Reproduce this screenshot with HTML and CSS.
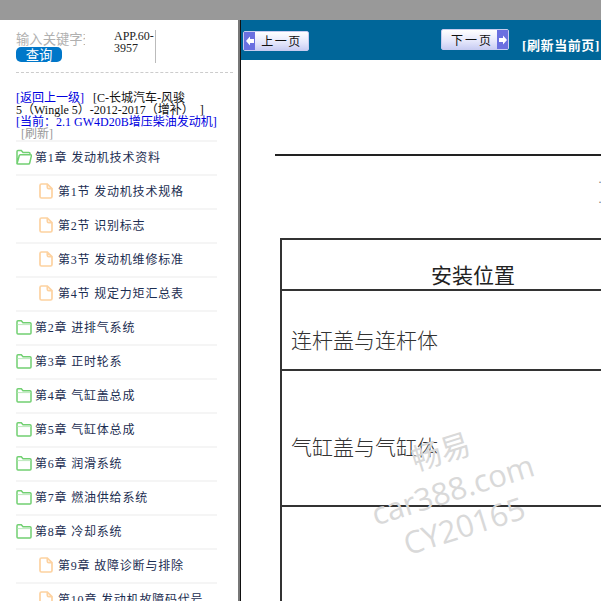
FILE: index.html
```html
<!DOCTYPE html>
<html lang="zh-CN">
<head>
<meta charset="utf-8">
<title>维修手册</title>
<link rel="stylesheet" href="styles.css">
</head>
<body>
<svg class="defs" width="0" height="0" aria-hidden="true">
  <symbol id="folder" viewBox="0 0 16 16"><path d="M1 14V2.800q0-1 1-1h3.300l1.700 2h7q1 0 1 1V14q0 1-1 1H2q-1 0-1-1z" fill="none" stroke="#72d072" stroke-width="1.500"/><path d="M1.500 5.600h13" stroke="#bce9bc" stroke-width="1"/></symbol>
  <symbol id="folder-open" viewBox="0 0 16 16"><path d="M1 14.500V2.500q0-1 1-1h3.300l1.700 2h6q1 0 1 1v1.300M1 14.800l2.200-8q.2-1 1.200-1h10.200q1 0 .8 1l-1.700 7.200q-.2 1-1.200 1H1.800q-.6 0-.8-.200z" fill="none" stroke="#72d072" stroke-width="1.500"/></symbol>
  <symbol id="file" viewBox="0 0 14 16"><path d="M2.500 1h5.800l4.700 4.700v7.800q0 1.500-1.500 1.500H2.500Q1 15 1 13.500v-11Q1 1 2.500 1zM8.300 1v3.200q0 1.500 1.500 1.500H13" fill="none" stroke="#fdd2a0" stroke-width="1.700"/></symbol>
</svg>
<div class="topbar"></div>
<main class="layout">
  <aside class="sidebar">
    <div class="search">
      <div class="search-field">
        <div class="search-input">输入关键字查询</div>
        <button class="search-btn">查询</button>
      </div>
      <div class="search-code">APP.60-3957</div>
    </div>
    <div class="crumbs">
      <a class="link">[返回上一级]</a><span class="crumb-dark">[C-长城汽车-风骏<br>5（Wingle 5）-2012-2017（增补）&nbsp;&nbsp;]</span><br>
      <a class="link">[当前：2.1 GW4D20B增压柴油发动机]</a><br>
      <span class="crumb-muted">[刷新]</span>
    </div>
    <ul class="tree">
      <li class="row"><svg class="ico-folder"><use href="#folder-open"/></svg><span class="row-text">第1章 发动机技术资料</span></li>
      <li class="row sub"><svg class="ico-file"><use href="#file"/></svg><span class="row-text">第1节 发动机技术规格</span></li>
      <li class="row sub"><svg class="ico-file"><use href="#file"/></svg><span class="row-text">第2节 识别标志</span></li>
      <li class="row sub"><svg class="ico-file"><use href="#file"/></svg><span class="row-text">第3节 发动机维修标准</span></li>
      <li class="row sub"><svg class="ico-file"><use href="#file"/></svg><span class="row-text">第4节 规定力矩汇总表</span></li>
      <li class="row"><svg class="ico-folder"><use href="#folder"/></svg><span class="row-text">第2章 进排气系统</span></li>
      <li class="row"><svg class="ico-folder"><use href="#folder"/></svg><span class="row-text">第3章 正时轮系</span></li>
      <li class="row"><svg class="ico-folder"><use href="#folder"/></svg><span class="row-text">第4章 气缸盖总成</span></li>
      <li class="row"><svg class="ico-folder"><use href="#folder"/></svg><span class="row-text">第5章 气缸体总成</span></li>
      <li class="row"><svg class="ico-folder"><use href="#folder"/></svg><span class="row-text">第6章 润滑系统</span></li>
      <li class="row"><svg class="ico-folder"><use href="#folder"/></svg><span class="row-text">第7章 燃油供给系统</span></li>
      <li class="row"><svg class="ico-folder"><use href="#folder"/></svg><span class="row-text">第8章 冷却系统</span></li>
      <li class="row sub"><svg class="ico-file"><use href="#file"/></svg><span class="row-text">第9章 故障诊断与排除</span></li>
      <li class="row sub"><svg class="ico-file"><use href="#file"/></svg><span class="row-text">第10章 发动机故障码代号</span></li>
    </ul>
  </aside>
  <section class="viewer">
    <header class="toolbar">
      <button class="page-btn prev"><span class="arrow"><svg width="8" height="10" viewBox="0 0 8 10"><path d="M0 5l4-4.500V3h4v4H4v2.500z" fill="#fff"/></svg></span><span class="page-label">上一页</span></button>
      <button class="page-btn next"><span class="page-label">下一页</span><span class="arrow"><svg width="8" height="10" viewBox="0 0 8 10"><path d="M8 5L4 .5V3H0v4h4v2.500z" fill="#fff"/></svg></span></button>
      <a class="refresh">[刷新当前页]</a>
    </header>
    <div class="doc">
      <div class="doc-rule"></div>
      <div class="doc-note">·<br>·</div>
      <table class="doc-table">
        <tr class="r-head"><th>安装位置</th></tr>
        <tr class="r-one"><td>连杆盖与连杆体</td></tr>
        <tr class="r-two"><td>气缸盖与气缸体</td></tr>
        <tr class="r-three"><td></td></tr>
      </table>
      <div class="watermark">
        <span class="wm-cn">畅易</span>
        <span class="wm-url">car388.com</span>
        <span class="wm-code">CY20165</span>
      </div>
    </div>
  </section>
</main>
</body>
</html>
```
FILE: styles.css
```css
* { box-sizing: border-box; }
html, body { margin: 0; height: 601px; overflow: hidden; background: #fff; }
body { font-family: "Liberation Serif", "Noto Sans CJK SC", serif; font-size: 12px; }
.defs { position: absolute; }
.topbar { height: 20px; background: #999; }
.layout { display: flex; height: 581px; }

.sidebar { width: 238px; flex: none; padding: 10px 5px 0 16px; overflow: hidden; }
.search { display: flex; height: 33px; }
.search-field { width: 98px; flex: none; display: flex; flex-direction: column; }
.search-input { width: 69px; height: 17px; padding-top: 1px; white-space: nowrap; overflow: hidden; font-size: 13.33px; line-height: 16px; color: #b0b0b0; font-family: "Noto Sans CJK SC", sans-serif; }
.search-btn { width: 46px; height: 15px; padding: 0; border: 0; border-radius: 5px; background: #0077c9; color: #fff; font: 13.33px/14px "Noto Sans CJK SC", sans-serif; }
.search-code { width: 42px; height: 33px; border-right: 1px solid #bbb; line-height: 12px; font-size: 12px; color: #222; word-break: break-word; }
.crumbs { margin-top: 9px; border-top: 1px dashed #ccc; padding-top: 19px; height: 68px; width: 217px; line-height: 12px; color: #000; font-size: 12px; white-space: nowrap; }
.link { color: #0000e0; }
.crumb-dark { color: #111; margin-left: 9px; }
.crumb-muted { color: #999; margin-left: 5px; }

.tree { list-style: none; margin: 0; padding: 0; width: 201px; }
.row { display: flex; align-items: center; gap: 3px; height: 34px; padding-bottom: 3px; border-top: 2px solid #f5f5f5; color: #1c2e52; font-size: 12px; letter-spacing: .8px; white-space: nowrap; }
.row.sub { padding-left: 23px; gap: 5px; }
.ico-folder { width: 16px; height: 16px; flex: none; }
.ico-file { width: 14px; height: 16px; flex: none; }

.viewer { flex: 1; min-width: 0; position: relative; overflow: hidden; border-left: 2px solid #777; }
.viewer::before { content: ""; position: absolute; left: 0; top: 0; bottom: 0; width: 1px; background: #111; }
.toolbar { height: 40px; margin-left: 1px; background: #069; display: flex; align-items: flex-start; padding: 9px 0 0 2px; }
.page-btn { display: flex; align-items: center; height: 20px; padding: 0; border: 1px solid #c8ccf0; border-radius: 2px; background: linear-gradient(#fff, #e4e6fb 60%, #c9cdf3); color: #111; }
.prev { width: 66px; margin-top: 2px; }
.prev .page-label { letter-spacing: 1.5px; }
.next { width: 68px; height: 21px; margin-left: 132px; }
.next .page-label { padding-left: 5px; }
.arrow { width: 11px; height: 100%; background: #6a70e0; display: flex; align-items: center; justify-content: center; flex: none; }
.page-label { flex: 1; text-align: center; font: 12px/16px "Noto Sans CJK SC", sans-serif; letter-spacing: 2px; }
.refresh { margin: 10px 0 0 13px; color: #fff; font-weight: 700; font-size: 13px; line-height: 14px; white-space: nowrap; letter-spacing: .6px; }

.doc { height: 541px; margin-left: 1px; padding: 94px 0 0 34px; position: relative; overflow: hidden; }
.doc-rule { width: 400px; height: 2px; background: #222; }
.doc-note { height: 82px; padding: 16px 0 0 323px; color: #777; font-size: 12px; line-height: 20px; }
.doc-table { width: 420px; margin-left: 5px; border-collapse: collapse; color: #333; font-family: "Noto Sans CJK SC", sans-serif; font-size: 21px; font-weight: 300; }
.doc-table th, .doc-table td { border: 1px solid #333; border-width: 2px 0 0 2px; padding: 0 0 0 9px; text-align: left; font-weight: 300; }
.doc-table th { padding: 0 185px 0 0; text-align: right; vertical-align: bottom; line-height: 30px; height: 51px; color: #222; font-weight: 400; font-size: 21px; }
.r-one td { height: 80px; padding-top: 18px; }
.r-two td { height: 136px; padding-top: 16px; }
.r-three td { height: 120px; }
.watermark { position: absolute; left: 116px; top: 369px; width: 190px; display: flex; flex-direction: column; align-items: center; transform: rotate(-17.5deg); color: #d9d9d9; font-family: "Open Sans", sans-serif; font-size: 30px; line-height: 38px; pointer-events: none; }
.wm-cn { font-family: "Noto Sans CJK SC", sans-serif; font-size: 30px; margin-bottom: 3px; }
.wm-url { font-size: 31px; }
.wm-code { font-size: 31px; }
```
